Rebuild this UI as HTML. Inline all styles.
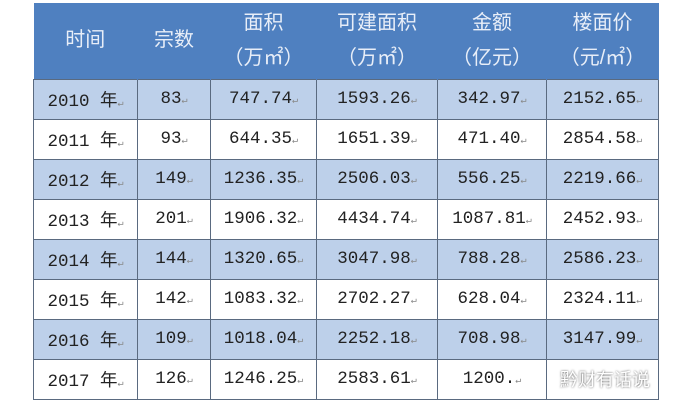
<html><head><style>
body{margin:0;width:690px;height:402px;background:#fff;overflow:hidden;position:relative}
table{position:absolute;left:33px;top:3px;border-collapse:collapse;table-layout:fixed}
td{border:1px solid #5a6a80;text-align:center;padding:0;font-family:"Liberation Mono","Noto Sans CJK SC",monospace;font-size:17.5px;color:#222;height:40px}
th{background:#4f80c0;color:#e8eef8;font-weight:normal;font-family:"Liberation Sans","Noto Sans CJK SC",sans-serif;font-size:20px;height:76px;line-height:35px;border-right:1px solid #4f80c0}
tr.o td{background:#bdd0ea}
td span{font-size:10px;color:#888}
.wm{position:absolute;left:560px;top:366px;font-family:"Noto Sans CJK SC",sans-serif;font-size:18px;color:#fff;text-shadow:0 0 2px #555}
</style></head><body>
<table>
<colgroup><col width="104"><col width="73"><col width="106"><col width="121"><col width="109"><col width="112"></colgroup>
<tr><th>时间</th><th>宗数</th><th>面积<br>（万㎡）</th><th>可建面积<br>（万㎡）</th><th>金额<br>（亿元）</th><th>楼面价<br>（元/㎡）</th></tr>
<tr class="o"><td>2010 年<span>↵</span></td><td>83<span>↵</span></td><td>747.74<span>↵</span></td><td>1593.26<span>↵</span></td><td>342.97<span>↵</span></td><td>2152.65<span>↵</span></td></tr>
<tr><td>2011 年<span>↵</span></td><td>93<span>↵</span></td><td>644.35<span>↵</span></td><td>1651.39<span>↵</span></td><td>471.40<span>↵</span></td><td>2854.58<span>↵</span></td></tr>
<tr class="o"><td>2012 年<span>↵</span></td><td>149<span>↵</span></td><td>1236.35<span>↵</span></td><td>2506.03<span>↵</span></td><td>556.25<span>↵</span></td><td>2219.66<span>↵</span></td></tr>
<tr><td>2013 年<span>↵</span></td><td>201<span>↵</span></td><td>1906.32<span>↵</span></td><td>4434.74<span>↵</span></td><td>1087.81<span>↵</span></td><td>2452.93<span>↵</span></td></tr>
<tr class="o"><td>2014 年<span>↵</span></td><td>144<span>↵</span></td><td>1320.65<span>↵</span></td><td>3047.98<span>↵</span></td><td>788.28<span>↵</span></td><td>2586.23<span>↵</span></td></tr>
<tr><td>2015 年<span>↵</span></td><td>142<span>↵</span></td><td>1083.32<span>↵</span></td><td>2702.27<span>↵</span></td><td>628.04<span>↵</span></td><td>2324.11<span>↵</span></td></tr>
<tr class="o"><td>2016 年<span>↵</span></td><td>109<span>↵</span></td><td>1018.04<span>↵</span></td><td>2252.18<span>↵</span></td><td>708.98<span>↵</span></td><td>3147.99<span>↵</span></td></tr>
<tr><td>2017 年<span>↵</span></td><td>126<span>↵</span></td><td>1246.25<span>↵</span></td><td>2583.61<span>↵</span></td><td>1200.<span>↵</span></td><td></td></tr>
</table>
<div class="wm">黔财有话说</div>
</body></html>
